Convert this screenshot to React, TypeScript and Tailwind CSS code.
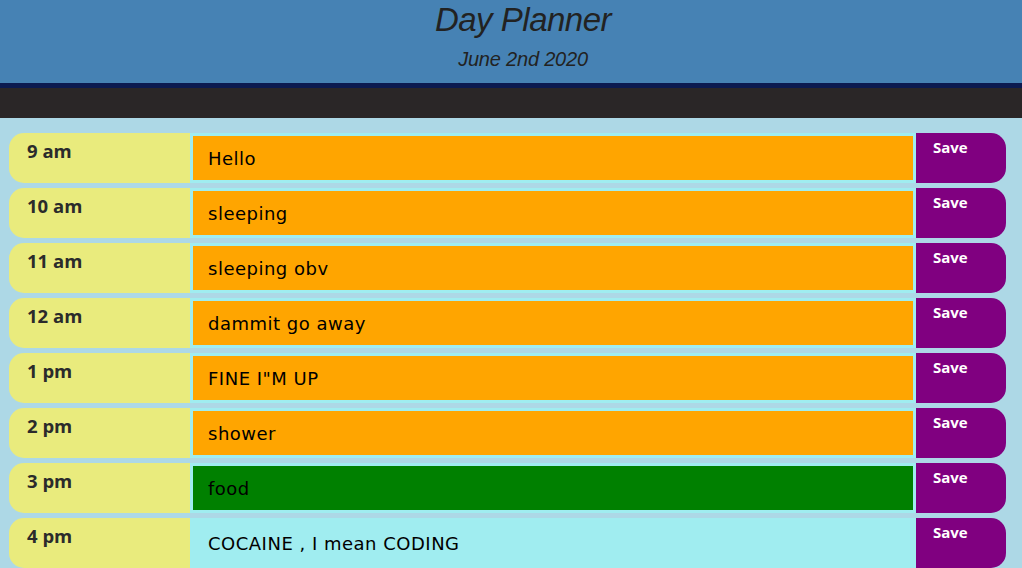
const rows = [
  { hour: "9 am", text: "Hello", tone: "bg-[#ffa500]" },
  { hour: "10 am", text: "sleeping", tone: "bg-[#ffa500]" },
  { hour: "11 am", text: "sleeping obv", tone: "bg-[#ffa500]" },
  { hour: "12 am", text: "dammit go away", tone: "bg-[#ffa500]" },
  { hour: "1 pm", text: 'FINE I"M UP', tone: "bg-[#ffa500]" },
  { hour: "2 pm", text: "shower", tone: "bg-[#ffa500]" },
  { hour: "3 pm", text: "food", tone: "bg-[#008000]" },
  { hour: "4 pm", text: "COCAINE , I mean CODING", tone: "bg-[#a0edf0]" },
];

function HourRow({ hour, text, tone }: { hour: string; text: string; tone: string }) {
  return (
    <div className="flex h-[50px]">
      <div className="w-[181px] shrink-0 rounded-l-[15px] bg-[#e9eb7d] pl-[18px] pt-[5px] font-['Open_Sans',sans-serif] text-[18.5px] font-bold leading-[26px] text-[#2b2b2b]">
        {hour}
      </div>
      <div
        className={`flex-1 border-[3px] border-[#a0edf0] ${tone} pl-[15px] pt-[11px] font-['DejaVu_Sans',sans-serif] text-[18px] leading-[24px] tracking-[0.5px] text-black`}
      >
        {text}
      </div>
      <button className="flex w-[90px] shrink-0 items-start rounded-r-[15px] bg-[#800080] pl-[17px] pt-[4px] font-['Open_Sans',sans-serif] text-[15px] font-bold leading-[20px] text-white">
        Save
      </button>
    </div>
  );
}

export default function App() {
  return (
    <div className="h-[568px] w-[1022px] overflow-hidden bg-[#add8e6]">
      <header className="flex h-[83px] flex-col items-center bg-[#4682b4] pl-[24px] font-['Liberation_Sans',Arial,sans-serif] italic text-[#222]">
        <h1 className="mt-[1px] text-[33px] leading-[38px] tracking-[-0.5px]">Day Planner</h1>
        <p className="mt-[8px] text-[20px] leading-[24px] tracking-[-0.2px]">June 2nd 2020</p>
      </header>
      <div className="h-[5px] bg-[#0b1a50]" />
      <div className="h-[30px] bg-[#2a2627]" />
      <main className="flex flex-col gap-[5px] pl-[9px] pr-[16px] pt-[15px]">
        {rows.map((r) => (
          <HourRow key={r.hour} {...r} />
        ))}
      </main>
    </div>
  );
}
